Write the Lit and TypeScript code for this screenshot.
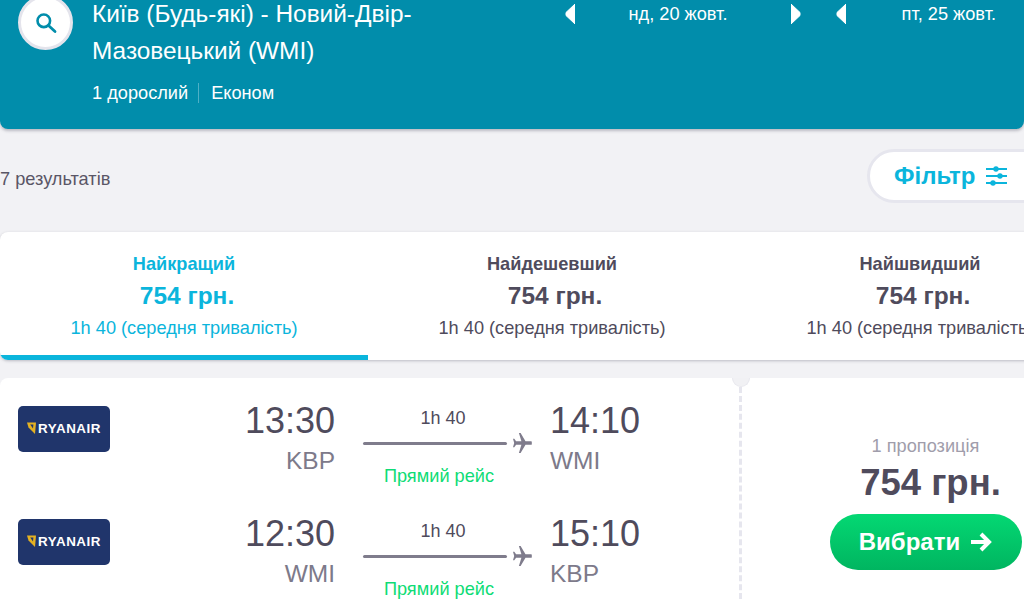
import { LitElement, html, css, svg } from "lit";
import { customElement } from "lit/decorators.js";

const plane = svg`<path d="M19.4 10c.9 0 .6-1.8-.4-1.8h-5.5L8.6 0H6.9l2.5 8.2H4.1L2.3 5.8H1l1.2 4.2L1 14.2h1.3l1.8-2.4h5.3L6.9 20h1.7l4.9-8.2H19c1 0 1.3-1.8.4-1.8z" fill="currentColor"/>`;

const flights = [
  { dep: "13:30", from: "KBP", arr: "14:10", to: "WMI" },
  { dep: "12:30", from: "WMI", arr: "15:10", to: "KBP" },
];
const tabs = [
  { name: "Найкращий", active: true },
  { name: "Найдешевший", active: false },
  { name: "Найшвидший", active: false },
];

@customElement("app-root")
export class AppRoot extends LitElement {
  static styles = css`
    :host { display: block; width: 1024px; height: 599px; overflow: hidden; background: #f2f2f5; font-family: "Liberation Sans", Arial, sans-serif; color: #4f4b5c; }
    .header { height: 129px; background: #018dab; border-radius: 0 0 8px 8px; box-shadow: 0 2px 3px rgba(60,60,80,.3); display: grid; grid-template-columns: 55px 492px 236px 1fr; padding-left: 18px; color: #fff; overflow: hidden; box-sizing: border-box; }
    .search { width: 55px; height: 55px; margin-top: -5px; border-radius: 50%; background: #fff; border: 3px solid #e4e4ec; box-sizing: border-box; display: flex; align-items: center; justify-content: center; color: #018dab; }
    .route { margin: -5px 0 0 19px; }
    .title { font-size: 24.4px; line-height: 37px; width: 345px; }
    .meta { display: flex; align-items: center; font-size: 18.2px; height: 20px; margin: 14px 0 0 0; }
    .meta .sep { width: 1px; height: 20px; background: #4fb0c6; margin: 0 12px 0 10px; }
    .date { display: flex; align-items: flex-start; justify-content: space-between; height: 28px; font-size: 18.2px; }
    .date span { line-height: 29px; }
    .date svg { display: block; margin-top: 4px; }
    .date.d1 span { margin-right: 10px; }
    .date.d2 { margin-left: 35px; width: 189px; }
    .date.d2 span { margin-right: 29px; }
    .tools { display: flex; justify-content: space-between; align-items: flex-start; height: 103px; }
    .count { font-size: 18.2px; color: #5a5666; margin-top: 39px; line-height: 22px; }
    .filter { flex: none; width: 200px; margin: 20px -43px 0 0; height: 54px; box-sizing: border-box; border: 3px solid #e6e6ee; border-radius: 27px; background: #fff; display: flex; align-items: center; padding-left: 24px; gap: 11px; color: #0bb5dc; font-weight: 700; font-size: 24px; }
    .tabs { width: 1104px; height: 128px; background: #fff; border-radius: 8px; box-shadow: 0 1px 3px rgba(60,60,80,.3); display: grid; grid-template-columns: repeat(3, 368px); overflow: hidden; }
    .tab { text-align: center; padding-top: 21px; box-sizing: border-box; border-bottom: 5px solid transparent; }
    .tab.on { color: #0bb5dc; border-bottom-color: #0bb5dc; }
    .tab .n { font-weight: 700; font-size: 18.2px; line-height: 22px; }
    .tab .p { font-weight: 700; font-size: 24.5px; line-height: 30px; margin: 6px 0 0 6px; }
    .tab .d { font-size: 18.2px; line-height: 22px; margin-top: 6px; }
    .card { position: relative; margin-top: 18px; width: 1104px; height: 240px; background: #fff; border-radius: 8px 8px 0 0; display: grid; grid-template-columns: 741px 1fr; }
    .notch { position: absolute; left: 732px; top: 0; width: 18px; height: 9px; border-radius: 0 0 9px 9px; background: #f1f1f4; border: 1px solid #e8e8ee; border-top: 0; box-sizing: border-box; }
    .legs { border-right: 3px dashed #e6e6ee; padding-top: 22px; box-sizing: border-box; width: 742px; }
    .leg { display: grid; grid-template-columns: 92px 225px 28px 188px 1fr; height: 113px; padding-left: 18px; box-sizing: border-box; }
    .logo { width: 92px; height: 46px; margin-top: 6px; padding-bottom: 2px; box-sizing: border-box; background: #20356b; border-radius: 5px; display: flex; align-items: center; justify-content: center; gap: 2px; color: #fff; font-weight: 700; font-size: 13.4px; letter-spacing: .5px; }
    .t { font-size: 36px; line-height: 42px; }
    .c { font-size: 24.5px; line-height: 26px; color: #7d7a8a; margin-top: 6px; }
    .dep { text-align: right; }
    .arr { text-align: left; margin-left: -1px; }
    .mid { display: grid; grid-template-columns: 144px 1fr; grid-template-rows: 22px 20px 22px; padding-top: 7px; }
    .dur { font-size: 18px; line-height: 22px; text-align: center; width: 160px; }
    .line { grid-column: 1; grid-row: 2; height: 3px; background: #7f7c8c; border-radius: 2px; align-self: center; margin-top: 8px; }
    .pl { grid-column: 2; grid-row: 2; color: #7f7c8c; align-self: center; margin: 8px 0 0 5px; display: block; }
    .direct { grid-column: 1; grid-row: 3; width: 152px; font-size: 18.2px; color: #0fdc76; text-align: center; margin-top: 16px; line-height: 22px; }
    .offer { display: flex; flex-direction: column; align-items: center; padding: 56px 0 0 6px; box-sizing: border-box; text-align: center; width: 363px; }
    .props { font-size: 18.2px; line-height: 22px; color: #a09dab; margin-top: 1px; }
    .price { font-weight: 700; font-size: 36.5px; line-height: 40px; margin: 6px 0 0 10px; }
    .btn { margin-top: 11px; width: 192px; height: 56px; border-radius: 28px; background: linear-gradient(#04d873, #00b560); color: #fff; font-weight: 700; font-size: 24px; display: flex; align-items: center; justify-content: center; gap: 10px; }
  `;

  private arrow(left: boolean) {
    return html`<svg width="10" height="20" viewBox="0 0 10 20"><path d=${left ? "M10 0v20L1 11.5v-3z" : "M0 0v20l9-8.5v-3z"} fill="#fff" stroke="#fff" stroke-linejoin="round"/></svg>`;
  }

  render() {
    return html`
      <div class="header">
        <div class="search">
          <svg width="22" height="22" viewBox="0 0 22 22" fill="none" stroke="currentColor"><circle cx="8.8" cy="8.8" r="6.3" stroke-width="2.6"/><path d="M13.5 13.5l6.5 6" stroke-width="2.8" stroke-linecap="round"/></svg>
        </div>
        <div class="route">
          <div class="title">Київ (Будь-які) - Новий-Двір-Мазовецький (WMI)</div>
          <div class="meta"><span>1 дорослий</span><i class="sep"></i><span>Економ</span></div>
        </div>
        <div class="date d1">${this.arrow(true)}<span>нд, 20 жовт.</span>${this.arrow(false)}</div>
        <div class="date d2">${this.arrow(true)}<span>пт, 25 жовт.</span></div>
      </div>
      <div class="tools">
        <div class="count">7 результатів</div>
        <div class="filter">Фільтр
          <svg width="21" height="20" viewBox="0 0 21 20" fill="none" stroke="currentColor" stroke-width="1.8" stroke-linecap="round"><path d="M0 3h21M0 10h21M0 17h21"/><g fill="currentColor" stroke="none"><circle cx="10" cy="3" r="2.7"/><circle cx="14" cy="10" r="2.7"/><circle cx="7" cy="17" r="2.7"/></g></svg>
        </div>
      </div>
      <div class="tabs">
        ${tabs.map(t => html`<div class="tab ${t.active ? "on" : ""}"><div class="n">${t.name}</div><div class="p">754 грн.</div><div class="d">1h 40 (середня тривалість)</div></div>`)}
      </div>
      <div class="card">
        <i class="notch"></i>
        <div class="legs">
          ${flights.map(f => html`
            <div class="leg">
              <div class="logo"><svg width="9" height="14" viewBox="0 0 9 14"><path d="M0 1.5h9L8 13 4.5 9.5 1.5 6.5z" fill="#e3b122"/><path d="M3.2 3.5h3.2L6 7.5z" fill="#20356b"/></svg>RYANAIR</div>
              <div class="dep"><div class="t">${f.dep}</div><div class="c">${f.from}</div></div>
              <div></div>
              <div class="mid">
                <div class="dur">1h 40</div>
                <div class="line"></div>
                <svg class="pl" width="20" height="20" viewBox="0 0 20 20">${plane}</svg>
                <div class="direct">Прямий рейс</div>
              </div>
              <div class="arr"><div class="t">${f.arr}</div><div class="c">${f.to}</div></div>
            </div>`)}
        </div>
        <div class="offer">
          <div class="props">1 пропозиція</div>
          <div class="price">754 грн.</div>
          <div class="btn">Вибрати
            <svg width="22" height="20" viewBox="0 0 22 20" fill="none" stroke="#fff" stroke-width="4"><path d="M1 10h18M11 2l8 8-8 8"/></svg>
          </div>
        </div>
      </div>
    `;
  }
}
